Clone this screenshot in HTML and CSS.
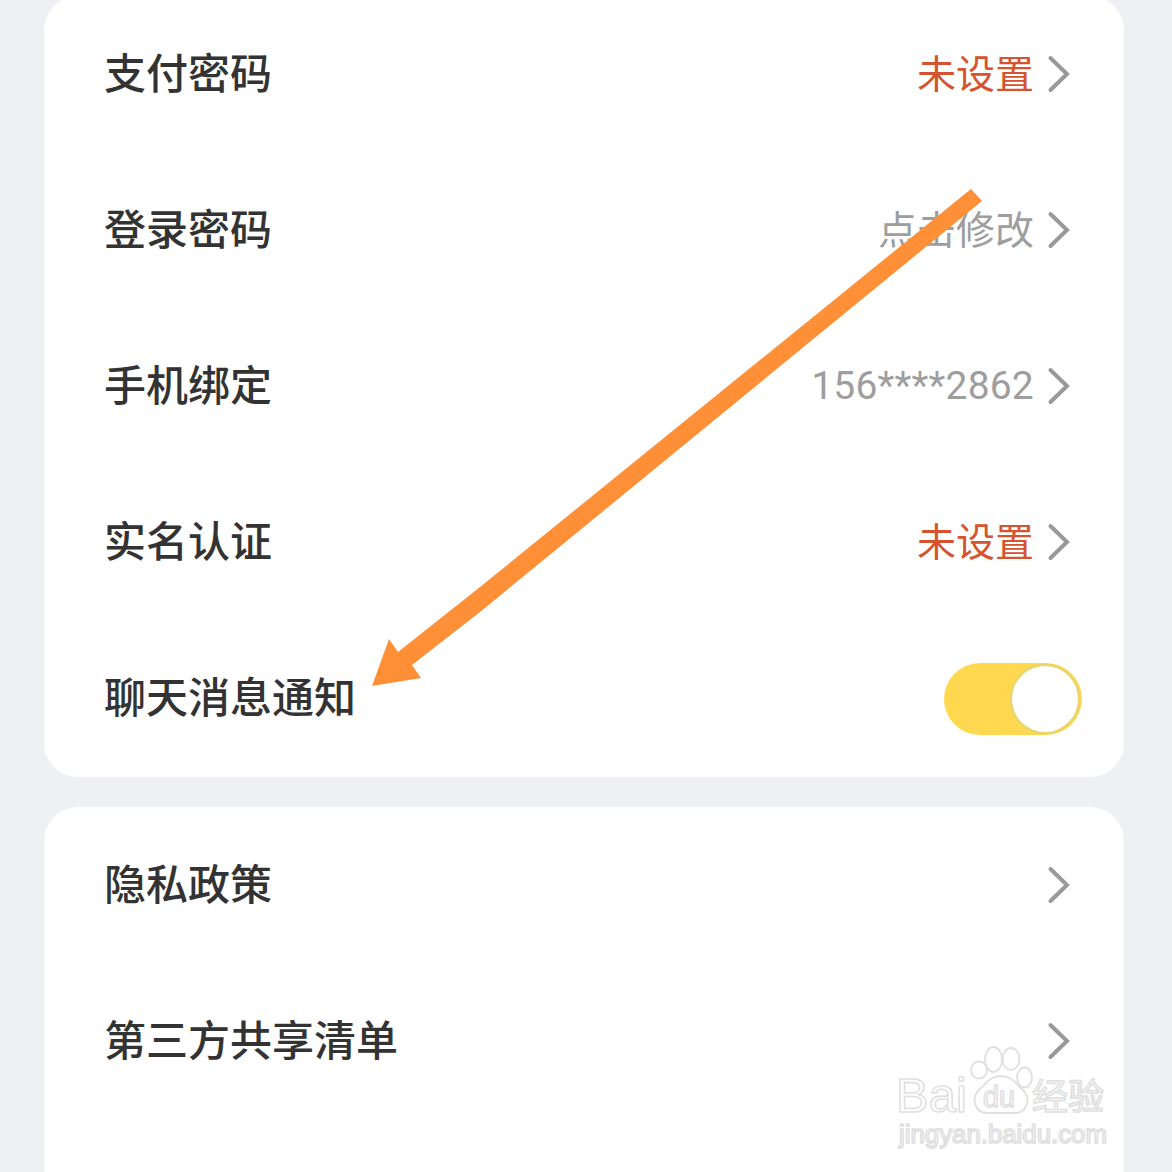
FILE: index.html
```html
<!DOCTYPE html>
<html lang="zh-CN">
<head>
<meta charset="utf-8">
<title>账号与安全</title>
<link rel="stylesheet" href="styles.css">
</head>
<body>
<main class="page">
  <section class="card card-first">
    <div class="row"><span class="label">支付密码</span><span class="side"><span class="value warn">未设置</span><svg class="chev" viewBox="0 0 24 40"><path d="M4.5 4L21 20L4.5 36"/></svg></span></div>
    <div class="row"><span class="label">登录密码</span><span class="side"><span class="value">点击修改</span><svg class="chev" viewBox="0 0 24 40"><path d="M4.5 4L21 20L4.5 36"/></svg></span></div>
    <div class="row"><span class="label">手机绑定</span><span class="side"><span class="value num">156****2862</span><svg class="chev" viewBox="0 0 24 40"><path d="M4.5 4L21 20L4.5 36"/></svg></span></div>
    <div class="row"><span class="label">实名认证</span><span class="side"><span class="value warn">未设置</span><svg class="chev" viewBox="0 0 24 40"><path d="M4.5 4L21 20L4.5 36"/></svg></span></div>
    <div class="row"><span class="label">聊天消息通知</span><span class="toggle"><span class="knob"></span></span></div>
  </section>
  <section class="card card-last">
    <div class="row"><span class="label">隐私政策</span><span class="side"><svg class="chev" viewBox="0 0 24 40"><path d="M4.5 4L21 20L4.5 36"/></svg></span></div>
    <div class="row"><span class="label">第三方共享清单</span><span class="side"><svg class="chev" viewBox="0 0 24 40"><path d="M4.5 4L21 20L4.5 36"/></svg></span></div>
  </section>
</main>
<svg class="arrow" viewBox="0 0 1172 1172"><polygon points="971,189 982,201 480,612 412,665 421,678 372,686 389,639 398,652 480,587"/></svg>
<div class="mark">
  <span class="mark-bai">Bai</span>
  <svg class="paw" viewBox="965 1044 70 72">
    <ellipse cx="979" cy="1070" rx="8" ry="8.5"/>
    <ellipse cx="993.5" cy="1059.5" rx="8.5" ry="12.5"/>
    <ellipse cx="1011" cy="1059" rx="8.5" ry="11"/>
    <ellipse cx="1024.5" cy="1077.5" rx="7.5" ry="10"/>
    <path d="M1001 1076C1012 1076 1016 1084 1022 1089C1032 1098 1027 1113 1015 1113L987 1113C975 1113 970 1098 980 1089C986 1084 990 1076 1001 1076Z"/>
  </svg>
  <span class="mark-du">du</span>
  <span class="mark-cn">经验</span>
  <span class="mark-url">jingyan.baidu.com</span>
</div>
</body>
</html>
```
FILE: styles.css
```css
html, body {
  margin: 0;
  height: 1172px;
  overflow: hidden;
  background: #eff0f4;
}
body {
  position: relative;
  font-family: "Noto Sans CJK SC", "Noto Sans", sans-serif;
}
.page {
  box-sizing: border-box;
  height: 1176px;
  display: flex;
  flex-direction: column;
  gap: 30px;
  margin: -4px 48px 0 44px;
}
.card {
  background: #fff;
  border-radius: 34px;
}
.card-first {
  padding-bottom: 1px;
}
.card-last {
  flex: 1;
  border-radius: 34px 34px 0 0;
}
.row {
  height: 156px;
  display: flex;
  align-items: center;
  justify-content: space-between;
  padding: 0 54px 0 60px;
}
.label {
  font-size: 42px;
  font-weight: 500;
  color: #333;
  line-height: 1;
  padding-bottom: 6px;
}
.side {
  display: flex;
  align-items: center;
  gap: 12px;
}
.value {
  font-size: 39px;
  color: #9e9e9e;
  line-height: 1;
  padding-bottom: 6px;
}
.value.warn { color: #d6532f; }
.value.num {
  font-family: "Roboto", sans-serif;
  font-size: 39px;
  letter-spacing: 0.2px;
  padding-bottom: 0;
}
.chev {
  width: 24px;
  height: 40px;
  fill: none;
  stroke: #999;
  stroke-width: 4;
  stroke-linecap: round;
  stroke-linejoin: miter;
}
.toggle {
  box-sizing: border-box;
  width: 138px;
  height: 72px;
  margin: 2px -12px 0 0;
  padding: 3px 4px 3px 0;
  display: flex;
  justify-content: flex-end;
  border-radius: 36px;
  background: #ffd84f;
}
.knob {
  width: 66px;
  height: 66px;
  border-radius: 50%;
  background: #fff;
  box-shadow: 0 0 0 2.5px #e9d56c;
}
.arrow {
  position: absolute;
  left: 0;
  top: 0;
  width: 1172px;
  height: 1172px;
  fill: #ff9038;
}
.mark {
  position: absolute;
  left: 896px;
  top: 1044px;
  width: 216px;
  height: 106px;
}
.mark span {
  position: absolute;
  color: #fff;
  -webkit-text-stroke: 1.6px #e0e0e0;
  font-family: "Liberation Sans", sans-serif;
  line-height: 1;
  white-space: nowrap;
}
.mark .mark-bai { left: 0; top: 27px; font-size: 49px; }
.mark .mark-du { left: 87px; top: 39px; font-size: 28.8px; }
.mark .mark-cn { left: 136px; top: 32px; font-size: 36px; font-family: "Noto Sans CJK SC", sans-serif; }
.mark .mark-url { left: 3px; top: 78px; font-size: 25.8px; }
.paw {
  position: absolute;
  left: 69px;
  top: 0;
  width: 70px;
  height: 72px;
  fill: none;
  stroke: #e0e0e0;
  stroke-width: 1.8;
}
```
